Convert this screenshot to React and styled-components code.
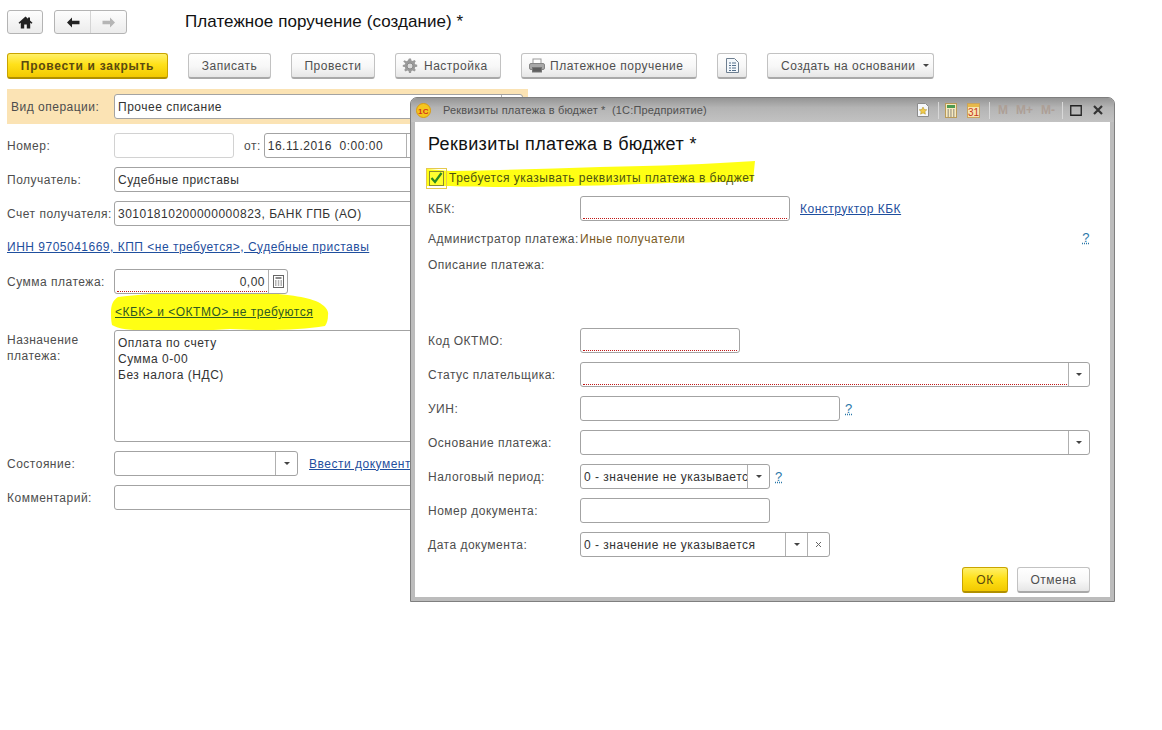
import React from "react";
import styled, { createGlobalStyle } from "styled-components";

const GlobalStyle = createGlobalStyle`
  html, body {
    margin: 0;
    padding: 0;
    background: #fff;
    font-family: "Liberation Sans", Arial, sans-serif;
    font-size: 12px;
    letter-spacing: 0.5px;
    color: #333;
  }
`;

const Page = styled.div`
  position: relative;
  width: 1162px;
  height: 730px;
  overflow: hidden;
  padding: 10px 0 0 7px;
  box-sizing: border-box;
`;

const Header = styled.div`
  display: flex;
  align-items: center;
  height: 24px;
`;

const NavButton = styled.div`
  display: flex;
  align-items: center;
  justify-content: center;
  width: ${(p) => p.$w}px;
  height: 24px;
  box-sizing: border-box;
  border: 1px solid #b4b4b4;
  border-radius: 3px;
  background: linear-gradient(#fdfdfd, #ececec);
`;

const NavGroup = styled.div`
  display: flex;
  margin-left: 11px;
  width: 73px;
  height: 24px;
  box-sizing: border-box;
  border: 1px solid #b4b4b4;
  border-radius: 3px;
  background: linear-gradient(#fdfdfd, #ececec);
`;

const NavCell = styled.div`
  flex: 1;
  display: flex;
  align-items: center;
  justify-content: center;
  & + & {
    border-left: 1px solid #d4d4d4;
  }
`;

const Title = styled.h1`
  margin: 0 0 0 58px;
  font-size: 17px;
  font-weight: 400;
  letter-spacing: 0.07px;
  color: #111;
`;

const Toolbar = styled.div`
  display: flex;
  gap: 20px;
  margin-top: 19px;
  height: 26px;
`;

const Button = styled.div`
  display: flex;
  align-items: center;
  justify-content: ${(p) => (p.$pl ? "flex-start" : "center")};
  gap: ${(p) => p.$gap || 7}px;
  width: ${(p) => p.$w}px;
  height: ${(p) => p.$h || 26}px;
  padding-left: ${(p) => p.$pl || 0}px;
  box-sizing: border-box;
  border: 1px solid #c2c2c2;
  border-bottom: 2px solid #a9a9a9;
  border-radius: 3px;
  background: linear-gradient(#ffffff, #f7f7f7 55%, #e6e6e6);
  color: #4f4f4f;
`;

const PrimaryButton = styled(Button)`
  border: 1px solid #c9a400;
  border-bottom: 2px solid #b09000;
  background: linear-gradient(#fff06a, #ffe11a 45%, #f2c900);
  color: #5a4a10;
  font-weight: ${(p) => (p.$bold ? 700 : 400)};
  letter-spacing: ${(p) => (p.$bold ? "0.72px" : "0.5px")};
`;

const Caret = styled.i`
  display: block;
  width: 0;
  height: 0;
  border-left: 3px solid transparent;
  border-right: 3px solid transparent;
  border-top: 3px solid #444;
`;

const Band = styled.div`
  display: flex;
  align-items: center;
  width: 521px;
  height: 35px;
  margin-top: 10px;
  background: #fbe3b4;
`;

const Form = styled.div`
  position: relative;
  isolation: isolate;
  display: flex;
  flex-direction: column;
  gap: 9px;
  width: 516px;
  margin-top: 9px;
`;

const Row = styled.div`
  position: relative;
  display: flex;
  align-items: ${(p) => (p.$top ? "flex-start" : "center")};
  height: ${(p) => p.$h || 25}px;
`;

const Label = styled.div`
  flex: none;
  width: ${(p) => p.$w || 107}px;
  padding-left: ${(p) => p.$pad || 0}px;
  padding-top: ${(p) => (p.$top ? 2 : 0)}px;
  box-sizing: border-box;
  color: #4d4d4d;
  line-height: 16px;
  white-space: ${(p) => (p.$wrap ? "normal" : "nowrap")};
`;

const Field = styled.div`
  position: relative;
  flex: ${(p) => (p.$w ? "none" : "1")};
  display: flex;
  align-items: ${(p) => (p.$multi ? "flex-start" : "center")};
  width: ${(p) => (p.$w ? `${p.$w}px` : "auto")};
  height: ${(p) => p.$h || 25}px;
  box-sizing: border-box;
  border: 1px solid ${(p) => (p.$light ? "#d2d2d2" : "#a3a3a3")};
  border-radius: 3px;
  background: #fff;
  color: #333;
  ${(p) =>
    p.$required &&
    `&::after {
      content: "";
      position: absolute;
      left: 2px;
      right: ${p.$inset || 2}px;
      bottom: 1px;
      border-bottom: 1px dotted #c01818;
    }`}
`;

const Value = styled.div`
  flex: 1;
  min-width: 0;
  padding: ${(p) => (p.$multi ? "4px 3px" : "0 3px")};
  overflow: hidden;
  white-space: ${(p) => (p.$multi ? "pre-wrap" : "pre")};
  text-align: ${(p) => (p.$right ? "right" : "left")};
  line-height: 16px;
  height: ${(p) => (p.$multi ? "auto" : "16px")};
`;

const FieldButton = styled.div`
  flex: none;
  align-self: stretch;
  display: flex;
  align-items: center;
  justify-content: center;
  width: ${(p) => p.$w || 20}px;
  border-left: 1px solid #b0b0b0;
`;

const Link = styled.a`
  margin-left: ${(p) => p.$gap || 0}px;
  color: ${(p) => p.$color || "#1f4f9e"};
  text-decoration: underline;
  white-space: nowrap;
`;

const DateLabel = styled.span`
  margin: 0 3px 0 10px;
  color: #4d4d4d;
`;

const LinkRowInner = styled.div`
  padding-bottom: 2px;
`;

const Mark = styled.svg`
  position: absolute;
  z-index: -1;
  left: ${(p) => p.$l}px;
  top: ${(p) => p.$t}px;
`;

const Dialog = styled.div`
  position: absolute;
  left: 410px;
  top: 97px;
  width: 705px;
  height: 505px;
  box-sizing: border-box;
  display: flex;
  flex-direction: column;
  border: 1px solid #7f7f7f;
  border-radius: 7px 7px 0 0;
  background: #bcbcbc;
`;

const TitleBar = styled.div`
  flex: none;
  display: flex;
  align-items: center;
  height: 24px;
  padding: 0 11px 0 5px;
  border-radius: 6px 6px 0 0;
  background: linear-gradient(#959595, #b4b4b4 40%, #c2c2c2);
`;

const WindowTitle = styled.div`
  margin-left: 12px;
  font-size: 11px;
  letter-spacing: 0.17px;
  color: #505050;
  white-space: pre;
`;

const BarIcons = styled.div`
  margin-left: auto;
  display: flex;
  align-items: center;
`;

const BarIcon = styled.div`
  display: flex;
  align-items: center;
  margin-left: ${(p) => p.$gap || 0}px;
`;

const BarDivider = styled.div`
  width: 1px;
  height: 17px;
  margin-left: ${(p) => p.$gap || 0}px;
  background: #d8d8d8;
`;

const MemoryKey = styled.span`
  margin-left: ${(p) => p.$gap || 0}px;
  font-size: 12px;
  font-weight: 700;
  letter-spacing: 0;
  color: #ad9f96;
`;

const DialogBody = styled.div`
  position: relative;
  isolation: isolate;
  flex: 1;
  margin: 0 4px 4px;
  padding: 12px 20px 0 13px;
  background: #fff;
  display: flex;
  flex-direction: column;
`;

const DialogTitle = styled.h2`
  margin: 0;
  height: 20px;
  line-height: 20px;
  font-size: 18px;
  font-weight: 400;
  letter-spacing: 0.38px;
  color: #111;
`;

const CheckRow = styled.div`
  position: relative;
  display: flex;
  align-items: center;
  height: 24px;
  margin-top: 12px;
  color: #4c5210;
`;

const Check = styled.div`
  display: flex;
  align-items: center;
  justify-content: center;
  width: 15px;
  height: 15px;
  margin: 0 5px 0 1px;
  box-sizing: border-box;
  border: 1px solid #8a8a30;
  outline: 1px solid #e5c94e;
  outline-offset: 2px;
  background: #ffff30;
`;

const DialogRows = styled.div`
  display: flex;
  flex-direction: column;
  gap: 9px;
  margin-top: ${(p) => p.$mt}px;
`;

const TextRow = styled.div`
  display: flex;
  align-items: center;
  height: 16px;
  margin-top: ${(p) => p.$mt || 0}px;
`;

const Payee = styled.span`
  color: #7a5a1e;
`;

const Help = styled.a`
  margin-left: ${(p) => (p.$end ? "auto" : `${p.$gap || 0}px`)};
  margin-bottom: ${(p) => (p.$end ? 4 : 1)}px;
  color: #2b77a8;
  font-size: 13px;
  text-decoration: underline dotted;
`;

const Footer = styled.div`
  display: flex;
  justify-content: flex-end;
  gap: 9px;
  margin-top: 10px;
`;

const Home = () => (
  <svg width="15" height="13" viewBox="0 0 15 13">
    <path d="M7.500.5 .5 6.800l1 1L2.800 6.700V12.500h3.400V8.500h2.600v4h3.400V6.700l1.300 1.100 1-1L12 4.600V1.500h-2v1.300z" fill="#222" />
  </svg>
);

const Arrow = ({ color, flip }) => (
  <svg width="14" height="11" viewBox="0 0 14 11" style={flip ? { transform: "scaleX(-1)" } : undefined}>
    <path d="M6 .5 1 5.500l5 5V7.200h7.500V3.800H6z" fill={color} />
  </svg>
);

const Gear = () => (
  <svg width="16" height="16" viewBox="0 0 16 16">
    <path
      d="M7 .5h2l.4 2 1.300.5 1.700-1.100 1.400 1.400-1.100 1.700.5 1.300 2 .4v2l-2 .4-.5 1.300 1.100 1.700-1.400 1.400-1.700-1.100-1.300.5-.4 2H7l-.4-2-1.300-.5-1.700 1.100-1.400-1.400 1.100-1.700-.5-1.300-2-.4V7l2-.4.5-1.300L1.200 3.600l1.400-1.400 1.700 1.100 1.300-.5z"
      fill="#9a9a9a"
    />
    <circle cx="8" cy="8" r="3" fill="#dadada" stroke="#8a8a8a" />
  </svg>
);

const Printer = () => (
  <svg width="16" height="15" viewBox="0 0 16 15">
    <rect x="4" y="1" width="8" height="5" fill="#fff" stroke="#9a9a9a" />
    <rect x=".5" y="5.500" width="15" height="6" rx="1.500" fill="#a8a8a8" stroke="#858585" />
    <rect x="3.500" y="9.500" width="9" height="4.500" fill="#5f5f5f" stroke="#777" />
  </svg>
);

const Doc = () => (
  <svg width="13" height="15" viewBox="0 0 13 15">
    <path d="M.5.500h8l4 4v10H.5z" fill="#f4f8fc" stroke="#6e7f90" />
    <path d="M3 5h2M6 5h4M3 7.500h2M6 7.500h4M3 10h2M6 10h4M3 12.500h2M6 12.500h4" stroke="#55708c" />
  </svg>
);

const Calc = () => (
  <svg width="11" height="13" viewBox="0 0 11 13">
    <rect x=".5" y=".5" width="10" height="12" fill="#fff" stroke="#666" />
    <path d="M2.500 3h6" stroke="#666" strokeWidth="1.500" />
    <path d="M2 6h1.500M4.800 6h1.500M7.500 6H9M2 8h1.500M4.800 8h1.500M7.500 8H9M2 10h1.500M4.800 10h1.500M7.500 10H9" stroke="#666" />
  </svg>
);

const Logo = () => (
  <svg width="15" height="15" viewBox="0 0 15 15">
    <circle cx="7.500" cy="7.500" r="7" fill="#f5c61e" stroke="#d99a10" />
    <text x="7.500" y="10.500" textAnchor="middle" fontSize="8" fontWeight="700" fill="#d3341a" fontFamily="Liberation Sans">
      1С
    </text>
  </svg>
);

const Favorite = () => (
  <svg width="12" height="14" viewBox="0 0 12 14">
    <path d="M.5.500h8l3 3v10H.5z" fill="#f5f7fa" stroke="#8c8c8c" />
    <path d="m6 4 1.200 2.500 2.600.3-1.900 1.800.5 2.600L6 9.900l-2.400 1.300.5-2.600-1.900-1.800 2.600-.3z" fill="#f1cb4c" stroke="#a98a20" strokeWidth=".5" />
  </svg>
);

const BarCalc = () => (
  <svg width="12" height="15" viewBox="0 0 12 15">
    <rect x=".5" y=".5" width="11" height="14" fill="#f7e9bd" stroke="#b99a58" />
    <rect x="2" y="2" width="8" height="3" fill="#4d9a50" />
    <path d="M2.500 7h1.500M5.200 7h1.500M8 7h1.500M2.500 9h1.500M5.200 9h1.500M8 9h1.500M2.500 11h1.500M5.200 11h1.500M8 11h1.500M2.500 13h1.500M5.200 13h1.500M8 13h1.500" stroke="#666" />
  </svg>
);

const BarCalendar = () => (
  <svg width="13" height="16" viewBox="0 0 13 16">
    <rect x=".5" y="1.500" width="12" height="14" fill="#f8e4b0" stroke="#c9a25e" />
    <rect x="1" y="2" width="11" height="3" fill="#e7b94a" />
    <text x="6.500" y="14" textAnchor="middle" fontSize="10" letterSpacing="0" fill="#c8381c" fontFamily="Liberation Sans">
      31
    </text>
  </svg>
);

const Maximize = () => (
  <svg width="12" height="11" viewBox="0 0 12 11">
    <path d="M.750.750h10.500v9.500H.750z" fill="none" stroke="#222" strokeWidth="1.300" />
  </svg>
);

const Close = () => (
  <svg width="10" height="10" viewBox="0 0 10 10">
    <path d="m1 1 8 8M9 1 1 9" stroke="#333" strokeWidth="2.200" />
  </svg>
);

const Tick = () => (
  <svg width="13" height="12" viewBox="0 0 13 12">
    <path d="m1.500 6 3.500 4 6.500-9" fill="none" stroke="#2a8a22" strokeWidth="2.200" />
  </svg>
);

const Cross = () => (
  <svg width="7" height="7" viewBox="0 0 7 7">
    <path d="m1 1 5 5M6 1 1 6" stroke="#666" />
  </svg>
);

function App() {
  return (
    <>
      <GlobalStyle />
      <Page>
        <Header>
          <NavButton $w={36}>
            <Home />
          </NavButton>
          <NavGroup>
            <NavCell>
              <Arrow color="#222" />
            </NavCell>
            <NavCell>
              <Arrow color="#b5b5b5" flip />
            </NavCell>
          </NavGroup>
          <Title>Платежное поручение (создание) *</Title>
        </Header>

        <Toolbar>
          <PrimaryButton $w={161} $bold>
            Провести и закрыть
          </PrimaryButton>
          <Button $w={83}>Записать</Button>
          <Button $w={84}>Провести</Button>
          <Button $w={106} $pl={6} $gap={6}>
            <Gear />
            Настройка
          </Button>
          <Button $w={176} $pl={7} $gap={5}>
            <Printer />
            Платежное поручение
          </Button>
          <Button $w={30}>
            <Doc />
          </Button>
          <Button $w={167} $pl={13}>
            Создать на основании
            <Caret />
          </Button>
        </Toolbar>

        <Band>
          <Label $pad={4}>Вид операции:</Label>
          <Field $w={409}>
            <Value>Прочее списание</Value>
            <FieldButton>
              <Caret />
            </FieldButton>
          </Field>
        </Band>

        <Form>
          <Row>
            <Label>Номер:</Label>
            <Field $w={120} $light />
            <DateLabel>от:</DateLabel>
            <Field $w={166}>
              <Value>16.11.2016  0:00:00</Value>
              <FieldButton $w={22} />
            </Field>
          </Row>
          <Row>
            <Label>Получатель:</Label>
            <Field>
              <Value>Судебные приставы</Value>
            </Field>
          </Row>
          <Row>
            <Label>Счет получателя:</Label>
            <Field>
              <Value>30101810200000000823, БАНК ГПБ (АО)</Value>
            </Field>
          </Row>
          <Row>
            <LinkRowInner>
              <Link>ИНН 9705041669, КПП &lt;не требуется&gt;, Судебные приставы</Link>
            </LinkRowInner>
          </Row>
          <Row>
            <Label>Сумма платежа:</Label>
            <Field $w={174} $required $inset={20}>
              <Value $right>0,00</Value>
              <FieldButton $w={18}>
                <Calc />
              </FieldButton>
            </Field>
          </Row>
          <Row $h={18}>
            <Label />
            <Link $gap={1} $color="#2f5a20">
              &lt;КБК&gt; и &lt;ОКТМО&gt; не требуются
            </Link>
            <Mark $l={103} $t={-11} width="226" height="42" viewBox="110 292 226 42">
              <path
                d="M111 312C111 305 113 300 118 297 140 294 180 292 240 292 280 293 305 296 318 302 325 306 329 310 328 315 328 320 327 323 325 326 300 330 267 331 230 329 200 331 170 332 150 331 130 330 118 329 112 325 111 321 111 316 111 312Z"
                fill="#ffff14"
              />
            </Mark>
          </Row>
          <Row $h={112} $top>
            <Label $wrap $top>
              Назначение платежа:
            </Label>
            <Field $h={112} $multi>
              <Value $multi>
                Оплата по счету{"\n"}Сумма 0-00{"\n"}Без налога (НДС)
              </Value>
            </Field>
          </Row>
          <Row>
            <Label>Состояние:</Label>
            <Field $w={184}>
              <Value />
              <FieldButton $w={21}>
                <Caret />
              </FieldButton>
            </Field>
            <Link $gap={11}>Ввести документ</Link>
          </Row>
          <Row>
            <Label>Комментарий:</Label>
            <Field />
          </Row>
        </Form>

        <Dialog>
          <TitleBar>
            <Logo />
            <WindowTitle>Реквизиты платежа в бюджет *  (1С:Предприятие)</WindowTitle>
            <BarIcons>
              <BarIcon>
                <Favorite />
              </BarIcon>
              <BarDivider $gap={9} />
              <BarIcon $gap={6}>
                <BarCalc />
              </BarIcon>
              <BarIcon $gap={10}>
                <BarCalendar />
              </BarIcon>
              <BarDivider $gap={9} />
              <MemoryKey $gap={8}>M</MemoryKey>
              <MemoryKey $gap={8}>M+</MemoryKey>
              <MemoryKey $gap={8}>M-</MemoryKey>
              <BarDivider $gap={7} />
              <BarIcon $gap={7}>
                <Maximize />
              </BarIcon>
              <BarIcon $gap={11}>
                <Close />
              </BarIcon>
            </BarIcons>
          </TitleBar>

          <DialogBody>
            <DialogTitle>Реквизиты платежа в бюджет *</DialogTitle>
            <CheckRow>
              <Check>
                <Tick />
              </Check>
              Требуется указывать реквизиты платежа в бюджет
              <Mark $l={-2} $t={-7} width="332" height="32" viewBox="426 160 332 32">
                <path
                  d="M427 170 450 172C500 171 550 170 600 168 660 167 710 165 755 162L753 182C720 183 695 184 667 184 620 186 575 187 533 188 500 188 470 188 450 187L427 187Z"
                  fill="#ffff14"
                />
              </Mark>
            </CheckRow>
            <DialogRows $mt={6}>
              <Row>
                <Label $w={152}>КБК:</Label>
                <Field $w={210} $required />
                <Link $gap={10}>Конструктор КБК</Link>
              </Row>
            </DialogRows>
            <TextRow $mt={10}>
              <Label $w={152}>Администратор платежа:</Label>
              <Payee>Иные получатели</Payee>
              <Help $end>?</Help>
            </TextRow>
            <TextRow $mt={10}>
              <Label $w={152}>Описание платежа:</Label>
            </TextRow>
            <DialogRows $mt={55}>
              <Row>
                <Label $w={152}>Код ОКТМО:</Label>
                <Field $w={160} $required />
              </Row>
              <Row>
                <Label $w={152}>Статус плательщика:</Label>
                <Field $required $inset={22}>
                  <Value />
                  <FieldButton>
                    <Caret />
                  </FieldButton>
                </Field>
              </Row>
              <Row>
                <Label $w={152}>УИН:</Label>
                <Field $w={260} />
                <Help $gap={5}>?</Help>
              </Row>
              <Row>
                <Label $w={152}>Основание платежа:</Label>
                <Field>
                  <Value />
                  <FieldButton>
                    <Caret />
                  </FieldButton>
                </Field>
              </Row>
              <Row>
                <Label $w={152}>Налоговый период:</Label>
                <Field $w={190}>
                  <Value>0 - значение не указывается</Value>
                  <FieldButton $w={21}>
                    <Caret />
                  </FieldButton>
                </Field>
                <Help $gap={5}>?</Help>
              </Row>
              <Row>
                <Label $w={152}>Номер документа:</Label>
                <Field $w={190} />
              </Row>
              <Row>
                <Label $w={152}>Дата документа:</Label>
                <Field $w={250}>
                  <Value>0 - значение не указывается</Value>
                  <FieldButton $w={21}>
                    <Caret />
                  </FieldButton>
                  <FieldButton $w={21}>
                    <Cross />
                  </FieldButton>
                </Field>
              </Row>
            </DialogRows>
            <Footer>
              <PrimaryButton $w={46}>ОК</PrimaryButton>
              <Button $w={73}>Отмена</Button>
            </Footer>
          </DialogBody>
        </Dialog>
      </Page>
    </>
  );
}

export default App;
